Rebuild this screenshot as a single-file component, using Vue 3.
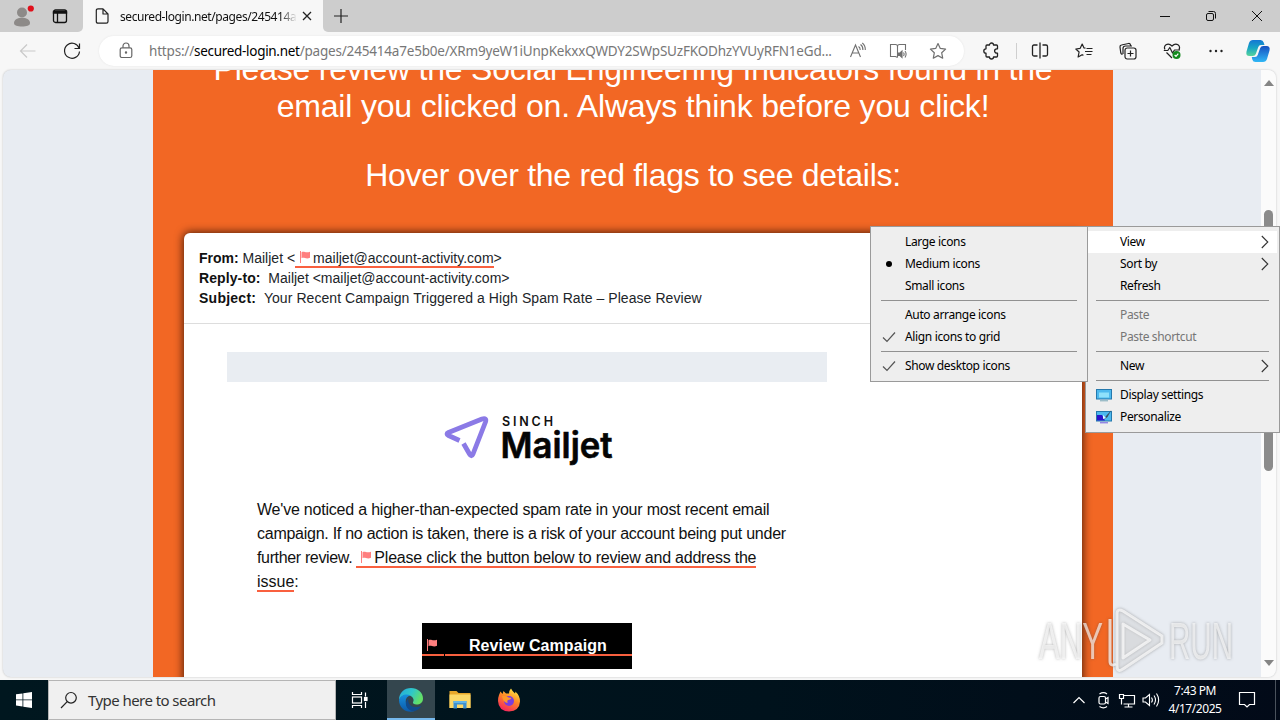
<template>
  <div class="screen">
    <!-- Tab strip -->
    <header class="tabs">
      <div class="tabs-left">
        <svg class="profile" width="24" height="24" viewBox="0 0 24 24">
          <circle cx="12" cy="8.500" r="5" fill="#8d8a88" />
          <path d="M4 19c0-7 16-7 16 0c0 2.600-3.500 3.500-8 3.500s-8-.9-8-3.500z" fill="#8d8a88" />
          <circle cx="20.800" cy="4.500" r="3.100" fill="#e0101b" />
        </svg>
        <svg class="workspace" width="16" height="16" viewBox="0 0 16 16" fill="none" stroke="#111" stroke-width="1.300">
          <rect x="1.500" y="2" width="13" height="12.500" rx="2" />
          <path d="M1.500 3.500h13v1.500h-13z" fill="#111" />
          <path d="M5.500 5v9.500" />
        </svg>
      </div>
      <div class="tab">
        <svg width="14" height="16" viewBox="0 0 14 16" fill="none" stroke="#222" stroke-width="1.200" stroke-linejoin="round">
          <path d="M3 .8h5L13 6v7.500q0 1.700-1.700 1.700H3q-1.700 0-1.700-1.700V2.500Q1.300.8 3 .8zM8 .8V6h5" />
        </svg>
        <span class="tab-title">secured-login.net/pages/245414a</span>
        <svg width="10" height="10" viewBox="0 0 10 10" stroke="#222" stroke-width="1.300"><path d="M1 1l8 8M9 1L1 9" /></svg>
      </div>
      <svg class="new-tab" width="16" height="16" viewBox="0 0 16 16" stroke="#222" stroke-width="1.200"><path d="M8 1v14M1 8h14" /></svg>
      <div class="caption">
        <svg width="46" height="32" viewBox="0 0 46 32" fill="none" stroke="#111"><path d="M18 16.500h10" /></svg>
        <svg width="46" height="32" viewBox="0 0 46 32" fill="none" stroke="#111">
          <rect x="18.500" y="13.500" width="7" height="7" rx="1.500" />
          <path d="M20.500 11.500h5q2 0 2 2v5" />
        </svg>
        <svg width="46" height="32" viewBox="0 0 46 32" fill="none" stroke="#111"><path d="M18 11l10 10M28 11L18 21" /></svg>
      </div>
    </header>

    <!-- Toolbar -->
    <nav class="toolbar">
      <svg width="44" height="30" viewBox="0 0 44 30" fill="none" stroke="#c9c9c9" stroke-width="1.200"><path d="M14.500 15H29.500M21 8.500L14.500 15l6.500 6.500" /></svg>
      <svg width="44" height="30" viewBox="0 0 44 30" fill="none" stroke="#222" stroke-width="1.200"><path d="M29.200 12.500A7.500 7.500 0 1 0 29.500 15.500M29.500 7.500v5h-5" /></svg>
      <div class="address">
        <svg width="14" height="18" viewBox="0 0 14 18" fill="none" stroke="#666" stroke-width="1.200">
          <rect x="1.200" y="5.800" width="11.600" height="9.700" rx="1.800" />
          <path d="M4 5.800V4a3 3 0 0 1 6 0v1.800" />
          <circle cx="7" cy="10.500" r=".6" fill="#666" />
        </svg>
        <span class="url">https://<b>secured-login.net</b>/pages/245414a7e5b0e/XRm9yeW1iUnpKekxxQWDY2SWpSUzFKODhzYVUyRFN1eGd...</span>
        <svg class="addr-icon" viewBox="0 0 18 18" fill="none" stroke="#707070" stroke-width="1.100">
          <path d="M1.500 15L6.500 3l5 12M3.200 11h6.600M9.500 4.500q1.800 1 1.700 3.500M11.500 2.500q2.600 1.800 2.400 5.500M13.300 1q3.200 2.500 3 7" />
        </svg>
        <svg class="addr-icon" viewBox="0 0 18 18" fill="none" stroke="#707070" stroke-width="1.100">
          <path d="M8.500 15.500L6.500 14.500H1.500V2.500h5q2 0 2 2 0-2 2-2h6V8M8.500 4.500v11" />
          <path d="M9.500 11h1.500l2-2v6.500l-2-2H9.500z" fill="#707070" />
          <path d="M14.500 10.500q1.200 1.700 0 3.500M16 9q2.200 3 0 6.500" />
        </svg>
        <svg class="addr-icon" viewBox="0 0 18 18" fill="none" stroke="#707070" stroke-width="1.200" stroke-linejoin="round"><path d="M9 1.500l2.300 4.900 5.300.7-3.900 3.700 1 5.400L9 13.600l-4.700 2.600 1-5.400L1.400 7.100l5.300-.7z" /></svg>
      </div>
      <svg class="tool" viewBox="0 0 18 18" fill="none" stroke="#222" stroke-width="1.300" stroke-linejoin="round"><path d="M5 3h2.500a2 2 0 0 1 4 0h3q1 0 1 1v2.800h-.7a2.200 2.200 0 0 0 0 4.400h.7V14q0 1-1 1h-3a2 2 0 0 1-4 0H5q-1 0-1-1v-2.800a2.200 2.200 0 0 1 0-4.400V4q0-1 1-1z" /></svg>
      <i class="tool-divider"></i>
      <svg class="tool" viewBox="0 0 18 18" fill="none" stroke="#222" stroke-width="1.300"><path d="M6.500 3H3Q1.500 3 1.500 4.500v8Q1.500 14 3 14h3.500M11.500 3H15q1.500 0 1.500 1.500v8Q16.500 14 15 14h-3.500M9 .5v16" /></svg>
      <svg class="tool" viewBox="0 0 18 18" fill="none" stroke="#222" stroke-width="1.200" stroke-linejoin="round"><path d="M10.500 6.200L9 6 7.200 2 5.200 6.300.8 7l3.300 3-1 5 4-2.300 1.300.7M11.500 6.500h6M10 9.500h7.500M11.500 12.500h5" /></svg>
      <svg class="tool" viewBox="0 0 18 18" fill="none" stroke="#222" stroke-width="1.200">
        <rect x="6" y="6" width="11" height="11" rx="2.200" />
        <path d="M11.500 8.500v6M8.500 11.500h6M3.500 12.500q-1.300-.2-1.700-1.500L1 5q-.2-1.700 1.500-2L9.500 1.500q1.600-.2 2 1.300l.2 1M4 12V6.500q0-2.500 2.500-2.500H13" />
      </svg>
      <svg class="tool" viewBox="0 0 18 18" fill="none" stroke="#222" stroke-width="1.200" stroke-linejoin="round">
        <path d="M2 7.500Q.5 4.500 3 2.700 6 1 9 4q3-3 6-1.300Q17.500 4.500 16 7.500M.8 8.500h4l2-3L9.500 11l2-3H17M3.500 10.500L9 16" />
        <circle cx="13.500" cy="13" r="4" fill="#138a1e" stroke="none" />
        <path d="M11.600 13l1.400 1.300 2.300-2.600" stroke="#fff" />
      </svg>
      <svg class="tool" viewBox="0 0 18 18" fill="#222"><circle cx="3.500" cy="9" r="1.200" /><circle cx="9" cy="9" r="1.200" /><circle cx="14.500" cy="9" r="1.200" /></svg>
      <svg class="copilot" width="26" height="26" viewBox="0 0 26 26">
        <defs>
          <linearGradient id="cpA" x1="0" y1="0" x2="0" y2="1"><stop offset="0" stop-color="#1377d4" /><stop offset=".5" stop-color="#17a6c4" /><stop offset="1" stop-color="#58d49b" /></linearGradient>
          <linearGradient id="cpB" x1="0" y1="0" x2="0" y2="1"><stop offset="0" stop-color="#164fc0" /><stop offset="1" stop-color="#30b7f5" /></linearGradient>
        </defs>
        <path d="M8 2h7.500q2.500 0 3.200 2.500L19.500 7H16q-2 0-2.700 2l-2.500 7q-.8 2-3 2H4.500Q.5 18 1.500 13.500L4 5q1-3 4-3z" fill="url(#cpA)" />
        <path d="M18 24h-7.500q-2.500 0-3.200-2.500L6.800 19H10q2 0 2.700-2l2.500-7q.8-2 3-2h3.300q4 0 3 4.500L22 21q-1 3-4 3z" fill="url(#cpB)" />
      </svg>
    </nav>

    <!-- Page -->
    <main class="viewport">
      <div class="page">
        <div class="hero">
          <p class="h-one">Please review the Social Engineering Indicators found in the</p>
          <p class="h-two">email you clicked on. Always think before you click!</p>
          <p class="hover-line">Hover over the red flags to see details:</p>
        </div>
        <article class="mail">
          <div class="mail-head">
            <p><b>From:</b> Mailjet &lt;<span class="flagged"><svg class="flag" viewBox="0 0 14 14"><path :d="flagPath" /></svg>mailjet@account-activity.com</span>&gt;</p>
            <p class="reply"><b>Reply-to:</b>&nbsp; Mailjet &lt;mailjet@account-activity.com&gt;</p>
            <p class="subject"><b>Subject:</b>&nbsp; Your Recent Campaign Triggered a High Spam Rate – Please Review</p>
          </div>
          <div class="mail-body">
            <div class="banner"></div>
            <svg class="logo" width="180" height="60" viewBox="0 0 180 60">
              <path d="M16.500 30.500L5.500 25.500Q2.500 24 5.500 22.500L39 9Q44 7.500 42.500 12L30 44Q28.500 47.500 26.500 44L20.500 33.500" fill="none" stroke="#8b7ae6" stroke-width="4.800" stroke-linejoin="round" />
              <text x="59" y="15.500" class="logo-small" textLength="51">SINCH</text>
              <text x="57.500" y="48" class="logo-big" textLength="112" lengthAdjust="spacingAndGlyphs">Mailjet</text>
            </svg>
            <div class="copy">
              <p class="l1">We've noticed a higher-than-expected spam rate in your most recent email</p>
              <p class="l2">campaign. If no action is taken, there is a risk of your account being put under</p>
              <p class="l3"><span class="lead">further review. </span><span class="flagged"><svg class="flag" viewBox="0 0 14 14"><path :d="flagPath" /></svg>Please click the button below to review and address the</span></p>
              <p><span class="flagged">issue</span>:</p>
            </div>
            <div class="cta">
              <span class="cta-flag"><svg class="flag" viewBox="0 0 14 14"><path :d="flagPath" /></svg></span>
              <span class="cta-text">Review Campaign</span>
            </div>
          </div>
        </article>
      </div>
      <div class="scrollbar">
        <i class="arrow up"></i>
        <i class="thumb"></i>
        <i class="arrow down"></i>
      </div>
    </main>

    <!-- Taskbar -->
    <footer class="taskbar">
      <div class="start">
        <svg width="16" height="16" viewBox="0 0 16 16" fill="#fff"><path d="M0 2.300l6.500-.9v6.100H0zM7.300 1.300L16 0v7.500H7.300zM0 8.300h6.500v6.200L0 13.600zM7.300 8.300H16V16l-8.700-1.300z" /></svg>
      </div>
      <div class="search">
        <svg width="18" height="18" viewBox="0 0 18 18" fill="none" stroke="#222" stroke-width="1.200"><circle cx="11" cy="6.800" r="5.300" /><path d="M7.200 10.600L1 17" /></svg>
        <span>Type here to search</span>
      </div>
      <div class="task view">
        <svg width="18" height="18" viewBox="0 0 18 18" fill="none" stroke="#fff" stroke-width="1.200">
          <path d="M1.500 1v2.500h9V1M1.500 17v-2.500h9V17M14.500 1.500v4M14.500 11v6" /><rect x="1.500" y="6" width="9" height="6" /><rect x="13.500" y="6.500" width="2.500" height="3" fill="#fff" />
        </svg>
      </div>
      <div class="task active">
        <svg width="26" height="26" viewBox="0 0 26 26">
          <defs>
            <linearGradient id="edA" x1="0" y1="0" x2="1" y2=".4"><stop offset="0" stop-color="#24a8dc" /><stop offset=".55" stop-color="#2fc7c9" /><stop offset="1" stop-color="#63df67" /></linearGradient>
            <linearGradient id="edB" x1="0" y1="0" x2="0" y2="1"><stop offset="0" stop-color="#1790de" /><stop offset="1" stop-color="#0c59a8" /></linearGradient>
          </defs>
          <path d="M1 13C1 5.500 6.500 1 13 1s12 4.500 12 10.500c0 4-3 6-6.500 6-2.500 0-4-1-3.500-2.200 1.200-2 .6-4.300-1.500-5.800C9 6.500 3 8 1 13z" fill="url(#edA)" />
          <path d="M1 13c1.500-5 7.500-7 11.500-4.500-4 1-5.500 4-4.500 8 1 4.500 5.500 7.500 10 7-8 4-17-1.500-17-10.500z" fill="url(#edB)" />
          <path d="M10.500 11.500c-1 4 1.500 8 6 8.500 2.500.2 5-.3 7-1.500-2 4-6 6-9.500 5.500-6-1.500-8.500-8.500-3.500-12.500z" fill="#114a8b" />
        </svg>
      </div>
      <div class="task">
        <svg width="22" height="20" viewBox="0 0 22 20">
          <path d="M.5 1h7l2 2h12v15H.5z" fill="#e8a72a" /><path d="M.5 4.500h21V18H.5z" fill="#fcd868" />
          <path d="M4.500 18.500V11h13v7.500h-3.300v-4H8v4z" fill="#3d91d1" /><path d="M4.500 11h13v2h-13z" fill="#62b5e8" />
        </svg>
      </div>
      <div class="task">
        <svg width="24" height="24" viewBox="0 0 24 24">
          <defs><linearGradient id="fx" x1=".8" y1="0" x2=".3" y2="1"><stop offset="0" stop-color="#fff048" /><stop offset=".45" stop-color="#ff8a26" /><stop offset="1" stop-color="#f5225e" /></linearGradient></defs>
          <path d="M2 7l1.500-3.500L5.500 6l1-3L9 5.500h3Q12 2.500 14 .5q1.500 3 4 5 .5-1 .3-2Q23 7.500 23 13.500 22.500 23 12 23.500 1.500 23 1 13q0-3.500 1-6z" fill="url(#fx)" />
          <circle cx="12" cy="13" r="5" fill="#7a3ede" /><path d="M5 8q4-1 6.500 1.500l3 .5q-1 2-3.500 2-1.500 1.500 0 3-5 0-6-7z" fill="#ff9828" />
        </svg>
      </div>
      <div class="tray">
        <svg width="24" height="40" viewBox="0 0 24 40" fill="none" stroke="#fff" stroke-width="1.200"><path d="M6.500 23l5.500-5.500 5.500 5.500" /></svg>
        <svg width="24" height="40" viewBox="0 0 24 40" fill="none" stroke="#fff" stroke-width="1.200"><rect x="8" y="16.500" width="6.500" height="7.500" rx="1.500" /><path d="M14.500 19l2.500-1.500v6L14.500 22M8.500 14q4-2.700 7.500 0M8.500 26.500q4 2.700 7.500 0" /></svg>
        <svg width="24" height="40" viewBox="0 0 24 40" fill="none" stroke="#fff" stroke-width="1.200"><path d="M8.500 15.500h11v8.500H8.500M13.500 24v3M9.500 27h8M6.500 19v5.500M4.500 14.500h4v4h-4z" /></svg>
        <svg width="24" height="40" viewBox="0 0 24 40" fill="none" stroke="#fff" stroke-width="1.100"><path d="M4 18h2.500l4-3.500v11l-4-3.500H4zM12.500 17.500q1.800 2.500 0 5M15 15.500q3 4.500 0 9M17.500 13.500q4.300 6.500 0 13" /></svg>
      </div>
      <div class="clock"><span>7:43 PM</span><span>4/17/2025</span></div>
      <svg width="18" height="18" viewBox="0 0 18 18" fill="none" stroke="#fff" stroke-width="1.200"><path d="M1.500 1.500h15v12h-5L9 16l-2.500-2.500h-5z" /></svg>
      <i class="peek"></i>
    </footer>

    <!-- Recorder watermark -->
    <svg class="watermark" width="200" height="72" viewBox="0 0 200 72">
      <text x="3" y="55" textLength="64" lengthAdjust="spacingAndGlyphs">ANY</text>
      <g fill="#fff" fill-opacity=".22" stroke="#fff" stroke-opacity=".72" stroke-width="3" stroke-linejoin="round">
        <path d="M87 7L126 32v7L87 65q-6 4-6-3V10q0-6 6-3z" />
        <path d="M87 20l27 16-27 18z" />
        <path d="M74 15v42q0 6 6 3" fill="none" />
      </g>
      <text x="133" y="55" textLength="64" lengthAdjust="spacingAndGlyphs">RUN</text>
    </svg>

    <!-- Desktop context menus -->
    <div class="menu main-menu">
      <template v-for="(item, i) in mainMenu" :key="'m' + i">
        <hr v-if="!item" />
        <div v-else class="item" :class="{ hot: item.hot, off: item.off }">
          <span class="mark">
            <svg v-if="item.icon" width="16" height="14" viewBox="0 0 16 14">
              <rect x=".5" y="1.500" width="15" height="9.500" fill="#4db9ee" stroke="#2579ad" />
              <path v-if="item.icon === 'display'" d="M3 4.500h10v5H3z" fill="#8fe1fb" />
              <template v-else>
                <path d="M1 5h5l3 5.500H1z" fill="#2b12c9" />
                <path d="M15.500 0L10 6 8 9.500 11.500 7z" fill="#385064" />
                <path d="M7 5l3 3-3 1z" fill="#e3f4ff" />
              </template>
              <path d="M4 12.800h8" :stroke="item.icon === 'display' ? '#79a9b8' : '#6d5be0'" />
            </svg>
          </span>
          <span class="label">{{ item.text }}</span>
          <svg v-if="item.sub" class="chev" width="8" height="14" viewBox="0 0 8 14" fill="none" stroke="#333" stroke-width="1.100"><path d="M.8 1l6 6-6 6" /></svg>
        </div>
      </template>
    </div>
    <div class="menu sub-menu">
      <template v-for="(item, i) in subMenu" :key="'s' + i">
        <hr v-if="!item" />
        <div v-else class="item">
          <span class="mark">
            <i v-if="item.mark === 'dot'" class="dot"></i>
            <svg v-if="item.mark === 'check'" width="14" height="12" viewBox="0 0 14 12" fill="none" stroke="#555" stroke-width="1.200"><path d="M1 6.500l4 4L13 1.500" /></svg>
          </span>
          <span class="label">{{ item.text }}</span>
        </div>
      </template>
    </div>
  </div>
</template>

<script setup>
const flagPath = 'M2 1h1v12H2zM3.500 2.200c2.500-1.400 4 1 8.500-.5v6.100c-4 1.700-6-.9-8.500.4z'

// null entries are separators
const mainMenu = [
  { text: 'View', sub: true, hot: true },
  { text: 'Sort by', sub: true },
  { text: 'Refresh' },
  null,
  { text: 'Paste', off: true },
  { text: 'Paste shortcut', off: true },
  null,
  { text: 'New', sub: true },
  null,
  { text: 'Display settings', icon: 'display' },
  { text: 'Personalize', icon: 'personalize' },
]

const subMenu = [
  { text: 'Large icons' },
  { text: 'Medium icons', mark: 'dot' },
  { text: 'Small icons' },
  null,
  { text: 'Auto arrange icons' },
  { text: 'Align icons to grid', mark: 'check' },
  null,
  { text: 'Show desktop icons', mark: 'check' },
]
</script>

<style>
body { margin: 0; overflow: hidden; }
</style>

<style scoped>
.screen {
  position: relative; width: 1280px; height: 720px; overflow: hidden;
  display: flex; flex-direction: column;
  background: #f7f7f7; font-family: "Noto Sans", "Open Sans", sans-serif;
}
p { margin: 0; white-space: nowrap; }
svg { display: block; flex: none; }

/* tab strip */
.tabs { height: 32px; display: flex; align-items: center; background: linear-gradient(90deg, #f7f7f7 0 330px, #cdcdcd 330px); flex: none; }
.tabs-left { width: 83px; height: 32px; display: flex; align-items: center; background: #cdcdcd; border-radius: 0 0 5px 0; box-sizing: border-box; padding-left: 10px; }
.profile { margin-top: -1px; }
.workspace { margin-left: 18px; }
.tab { width: 240px; height: 32px; box-sizing: border-box; padding: 0 11px 0 12px; display: flex; align-items: center; background: #f7f7f7; border-radius: 6px 6px 0 0; }
.tab-title {
  width: 177px; margin: 0 5px 0 11px; overflow: hidden; white-space: nowrap;
  font-size: 12px; letter-spacing: -.42px; color: #111;
  -webkit-mask-image: linear-gradient(90deg, #000 160px, transparent 177px);
  mask-image: linear-gradient(90deg, #000 160px, transparent 177px);
}
.new-tab { padding: 8px 0 8px 10px; width: 16px; background: #cdcdcd; border-radius: 0 0 0 5px; height: 16px; }
.caption { margin-left: auto; display: flex; }

/* toolbar */
.toolbar { height: 38px; display: flex; align-items: center; padding-left: 6px; flex: none; }
.address { width: 865px; height: 30px; margin: 0 5px; box-sizing: border-box; padding: 0 17px 0 20px; display: flex; align-items: center; background: #fff; border-radius: 15px; box-shadow: 0 0 2px #e3e3e3; }
.url { width: 684px; margin: 0 17px 0 16px; white-space: nowrap; font-size: 13.500px; letter-spacing: -.19px; color: #777; }
.url b { font-weight: 400; letter-spacing: -.3px; color: #000; }
.addr-icon { width: 18px; height: 18px; margin-right: 22px; }
.addr-icon:last-child { margin-right: 0; }
.tool { width: 18px; height: 18px; padding: 0 13px; }
.tool-divider { width: 1px; height: 16px; margin: 0 1px 0 3px; background: #cfcfcf; }
.copilot { margin-left: 7px; }

/* viewport */
.viewport { width: 1273px; height: 607px; margin-left: 3px; box-sizing: border-box; display: flex; overflow: hidden; background: #e8ecf2; border-radius: 8px; box-shadow: 0 0 2px #bbb; flex: none; }
.page { width: 960px; height: 607px; margin-left: 150px; background: #f26724; font-family: "Liberation Sans", Arial, sans-serif; }
.hero { height: 163px; overflow: hidden; color: #fff; text-align: center; font-size: 32px; line-height: 37px; }
.hero p:first-child { margin-top: -19px; }
.h-one { letter-spacing: -.22px; }
.h-two { letter-spacing: -.18px; }
.hover-line { margin-top: 32px; letter-spacing: -.31px; }
.mail { width: 898px; height: 500px; margin-left: 31px; background: #fff; border-radius: 6px 6px 0 0; box-shadow: 0 0 8px 1px rgba(30, 10, 0, .75); }
.mail-head { height: 91px; box-sizing: border-box; padding: 15px; border-bottom: 1px solid #ddd; font-size: 14px; line-height: 20px; color: #212529; }
.mail-head b { color: #111; }
.reply b { letter-spacing: .1px; }
.subject { letter-spacing: .065px; }
.subject b { letter-spacing: .25px; }
.flag { display: inline-block; width: 14px; height: 14px; vertical-align: -1px; fill: #ff7f7f; margin: 0 1px 0 3px; }
.flagged { border-bottom: 2px solid #f9603f; }
.mail-body { width: 600px; margin-left: 43px; padding-top: 28px; color: #111; }
.banner { height: 30px; background: #e9edf2; }
.logo { margin: 28px 0 0 216px; }
.logo-small { font: 600 12.500px "Inter", sans-serif; fill: #111; }
.logo-big { font: 600 35.500px "Inter", sans-serif; fill: #050505; stroke: #050505; stroke-width: .6; }
.copy { margin: 28px 0 0 30px; font-size: 16px; line-height: 24px; }
.l1 { letter-spacing: -.21px; }
.l2 { letter-spacing: -.26px; }
.l3 { letter-spacing: -.22px; }
.lead { letter-spacing: -.35px; }
.cta { width: 210px; height: 46px; margin: 29px 0 0 195px; display: flex; align-items: center; background: #000; color: #fff; font-weight: 700; font-size: 16px; line-height: 20px; }
.cta-flag { width: 22px; height: 18px; margin-right: 1px; border-bottom: 2px solid #f9603f; }
.cta-text { width: 187px; height: 18px; text-indent: 24px; letter-spacing: .06px; border-bottom: 2px solid #f9603f; white-space: nowrap; }

.scrollbar { width: 15px; margin-left: auto; display: flex; flex-direction: column; align-items: center; background: #fbfbfb; }
.arrow { border: 5px solid transparent; }
.up { border-top: 0; border-bottom: 6px solid #858585; margin-top: 10px; }
.down { border-bottom: 0; border-top: 6px solid #858585; margin-top: auto; margin-bottom: 11px; }
.thumb { width: 9px; height: 261px; margin-top: 124px; border-radius: 5px; background: #8b8b8b; }

/* taskbar */
.taskbar { height: 40px; margin-top: 3px; display: flex; align-items: center; background: linear-gradient(90deg, #00171f, #00121c 60%, #020a18); color: #fff; flex: none; }
.start { width: 48px; display: flex; justify-content: center; }
.search { width: 288px; height: 40px; box-sizing: border-box; border: 1px solid #b5b5b5; display: flex; align-items: center; gap: 10px; padding-left: 11px; background: #f0f0f0; color: #333; font-size: 15px; letter-spacing: -.56px; }
.task { width: 49px; height: 40px; display: flex; align-items: center; justify-content: center; }
.task.view { width: 51px; box-sizing: border-box; padding-right: 3px; }
.task.active { width: 48px; background: #34464e; box-shadow: inset 0 -2px #76b9ed; }
.tray { margin-left: auto; display: flex; }
.clock { width: 64px; margin-right: 11px; display: flex; flex-direction: column; align-items: center; font-size: 12px; line-height: 18px; letter-spacing: -.45px; white-space: nowrap; }
.peek { width: 1px; height: 40px; margin: 0 4px 0 19px; background: #4a525c; }

/* watermark */
.watermark { position: absolute; left: 1036px; top: 604px; filter: drop-shadow(0 0 1.500px rgba(70, 70, 70, .6)); }
.watermark text { font: 400 52px "Liberation Sans", sans-serif; fill: #fff; fill-opacity: .65; }

/* menus */
.menu { position: absolute; box-sizing: border-box; padding: 4px 2px 4px 1px; background: #eee; border: 1px solid #9a9a9a; color: #000; font-size: 12px; letter-spacing: -.35px; }
.main-menu { left: 1085px; top: 226px; width: 195px; height: 207px; }
.sub-menu { left: 870px; top: 226px; width: 218px; height: 156px; }
.item { height: 22px; display: flex; align-items: center; white-space: nowrap; }
.item.hot { background: #fff; }
.item.off { color: #767676; }
.mark { width: 33px; display: flex; justify-content: center; flex: none; }
.label { flex: 1; padding-bottom: 2px; }
.chev { margin-right: 8px; }
.dot { width: 6px; height: 6px; border-radius: 50%; background: #000; }
hr { height: 1px; margin: 3px 8px 3px 9px; border: 0; background: #919191; }
</style>
